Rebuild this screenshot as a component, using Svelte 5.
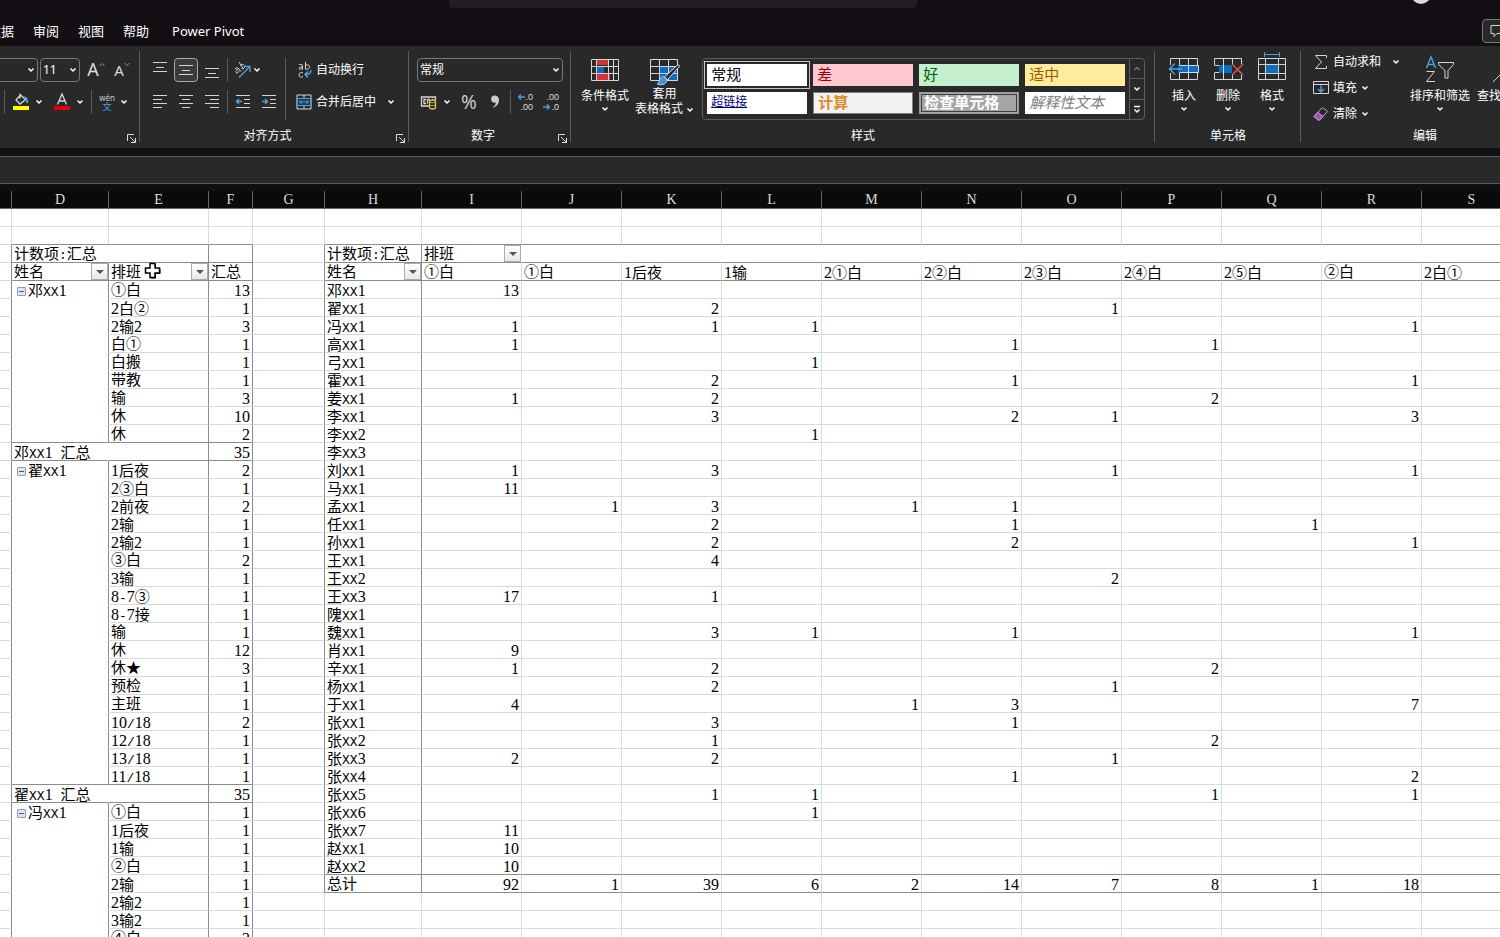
<script lang="ts">
type LeftRow = { name?: string; shift?: string; count: number; total?: boolean };

const tabs = ["数据", "审阅", "视图", "帮助"];

const columns = [
  { id: "C", width: 12 },
  { id: "D", width: 97 },
  { id: "E", width: 100 },
  { id: "F", width: 44 },
  { id: "G", width: 72 },
  { id: "H", width: 97 },
  ..."IJKLMNOPQRSTUV".split("").map((id) => ({ id, width: 100 })),
];

function person(name: string, items: [string, number][]): LeftRow[] {
  return items.map(([shift, count], i) => ({
    name: i === 0 ? name : undefined,
    shift,
    count,
  }));
}

const left: LeftRow[] = [
  ...person("邓XX1", [
    ["①白", 13], ["2白②", 1], ["2输2", 3], ["白①", 1], ["白搬", 1],
    ["带教", 1], ["输", 3], ["休", 10], ["休", 2],
  ]),
  { name: "邓XX1 汇总", count: 35, total: true },
  ...person("翟XX1", [
    ["1后夜", 2], ["2③白", 1], ["2前夜", 2], ["2输", 1], ["2输2", 1],
    ["③白", 2], ["3输", 1], ["8-7③", 1], ["8-7接", 1], ["输", 1],
    ["休", 12], ["休★", 3], ["预检", 1], ["主班", 1], ["10/18", 2],
    ["12/18", 1], ["13/18", 1], ["11/18", 1],
  ]),
  { name: "翟XX1 汇总", count: 35, total: true },
  ...person("冯XX1", [
    ["①白", 1], ["1后夜", 1], ["1输", 1], ["②白", 1], ["2输", 1],
    ["2输2", 1], ["3输2", 1], ["④白", 2],
  ]),
];

const shifts = ["①白", "①白", "1后夜", "1输", "2①白", "2②白", "2③白", "2④白", "2⑤白", "②白", "2白①"];

// counts are keyed by column letter
const right: [string, Record<string, number>][] = [
  ["邓XX1", { I: 13 }],
  ["翟XX1", { K: 2, O: 1 }],
  ["冯XX1", { I: 1, K: 1, L: 1, R: 1 }],
  ["高XX1", { I: 1, N: 1, P: 1 }],
  ["弓XX1", { L: 1 }],
  ["霍XX1", { K: 2, N: 1, R: 1 }],
  ["姜XX1", { I: 1, K: 2, P: 2 }],
  ["李XX1", { K: 3, N: 2, O: 1, R: 3 }],
  ["李XX2", { L: 1 }],
  ["李XX3", {}],
  ["刘XX1", { I: 1, K: 3, O: 1, R: 1 }],
  ["马XX1", { I: 11 }],
  ["孟XX1", { J: 1, K: 3, M: 1, N: 1 }],
  ["任XX1", { K: 2, N: 1, Q: 1 }],
  ["孙XX1", { K: 2, N: 2, R: 1 }],
  ["王XX1", { K: 4 }],
  ["王XX2", { O: 2 }],
  ["王XX3", { I: 17, K: 1 }],
  ["隗XX1", {}],
  ["魏XX1", { K: 3, L: 1, N: 1, R: 1 }],
  ["肖XX1", { I: 9 }],
  ["辛XX1", { I: 1, K: 2, P: 2 }],
  ["杨XX1", { K: 2, O: 1 }],
  ["于XX1", { I: 4, M: 1, N: 3, R: 7 }],
  ["张XX1", { K: 3, N: 1 }],
  ["张XX2", { K: 1, P: 2 }],
  ["张XX3", { I: 2, K: 2, O: 1 }],
  ["张XX4", { N: 1, R: 2 }],
  ["张XX5", { K: 1, L: 1, P: 1, R: 1 }],
  ["张XX6", { L: 1 }],
  ["张XX7", { I: 11 }],
  ["赵XX1", { I: 10 }],
  ["赵XX2", { I: 10 }],
  ["总计", { I: 92, J: 1, K: 39, L: 6, M: 2, N: 14, O: 7, P: 8, Q: 1, R: 18 }],
];

const firstData = 4;
const lastRight = firstData + right.length - 1;
const rowCount = firstData + left.length;

function buildCell(r: number, c: number) {
  const col = columns[c].id;
  const item = left[r - firstData];
  const next = left[r - firstData + 1];
  const cell = { text: "", num: false, filter: false, toggle: false, cls: "" };
  const cls: string[] = [];

  if (c >= 1 && c <= 3) {
    if (r === 2 && c === 1) cell.text = "计数项:汇总";
    if (r === 3) {
      cell.text = ["姓名", "排班", "汇总"][c - 1];
      cell.filter = c < 3;
    }
    if (item) {
      if (c === 1) {
        cell.text = item.name ?? "";
        cell.toggle = !!item.name && !item.total;
      }
      if (c === 2) cell.text = item.shift ?? "";
      if (c === 3) {
        cell.text = String(item.count);
        cell.num = true;
      }
    }
    if (r >= 1 && r <= 3) cls.push("dark-b");
    else if (item && (item.total || next?.total)) cls.push("dark-b");
    else if (item && c === 1) cls.push("no-b");
    if (r >= 2) cls.push(c === 1 && (r === 2 || item?.total) ? "no-r" : "dark-r");
  }
  if (c === 0 && r >= 2) cls.push("dark-r");
  if (c === 4 && r >= 2 && r <= lastRight) cls.push("dark-r");

  if (c >= 5) {
    const entry = right[r - firstData];
    if (r === 2 && c === 5) cell.text = "计数项:汇总";
    if (r === 2 && c === 6) cell.text = "排班";
    if (r === 3) cell.text = c === 5 ? "姓名" : (shifts[c - 6] ?? "");
    cell.filter = (r === 2 && c === 6) || (r === 3 && c === 5);
    if (entry) {
      if (c === 5) cell.text = entry[0];
      else if (entry[1][col]) {
        cell.text = String(entry[1][col]);
        cell.num = true;
      }
    }
    if ((r >= 1 && r <= 3) || r === lastRight - 1 || r === lastRight) cls.push("dark-b");
    if (c === 5 && r >= 2 && r <= lastRight) cls.push("dark-r");
    if (c > 5 && r === 2) cls.push("no-r");
  }
  cell.cls = cls.join(" ");
  return cell;
}

const grid = Array.from({ length: rowCount }, (_, r) => columns.map((_, c) => buildCell(r, c)));

// digits and other latin characters are set so that each is half as wide as a hanzi
function runs(text: string) {
  return text.split(/(\d+|[ -~]+?(?=\d|[^ -~]|$))/).filter(Boolean).map((part) => ({
    part,
    kind: /^\d/.test(part) ? "digit" : /^[ -~]/.test(part) ? "half" : "full",
  }));
}

const cellStyles = [
  ["常规", "normal"], ["差", "bad"], ["好", "good"], ["适中", "neutral"],
  ["超链接", "hyper"], ["计算", "calc"], ["检查单元格", "check"], ["解释性文本", "note"],
];

const alignIcons = {
  left: "M1 1.500h14M1 5.500h9M1 9.500h14M1 13.500h9",
  center: "M1 1.500h14M4 5.500h8M1 9.500h14M4 13.500h8",
  right: "M1 1.500h14M6 5.500h9M1 9.500h14M6 13.500h9",
};
</script>

{#snippet chevron()}
  <svg class="chevron" width="8" height="6" viewBox="0 0 8 6"><path d="M1.5 1.5 4 4l2.5-2.5" /></svg>
{/snippet}

{#snippet launcher(label)}
  <button class="launcher" aria-label={label}>
    <svg width="9" height="9" viewBox="0 0 9 9"><path d="M.5 7V.5H7M3 3l5 5M8.5 4v4.5H4" /></svg>
  </button>
{/snippet}

{#snippet stroke(d)}
  <svg width="16" height="16" viewBox="0 0 16 16"><path class="line" {d} /></svg>
{/snippet}

<div class="app">
  <header>
    <div class="search"></div>
    <div class="avatar"></div>
    <nav>
      {#each tabs as tab}
        <button class="tab">{tab}</button>
      {/each}
      <button class="tab">Power Pivot</button>
      <button class="comments" aria-label="批注">
        <svg width="16" height="14" viewBox="0 0 16 14"><path class="line" d="M1 1.500h14v8H7l-3 3v-3H1z" /></svg>
      </button>
    </nav>
  </header>

  <section class="ribbon">
    <div class="group font">
      <div class="body rows">
        <div class="row">
          <span class="combo name"><select aria-label="字体"><option></option></select>{@render chevron()}</span>
          <span class="combo size"><select aria-label="字号"><option>11</option></select>{@render chevron()}</span>
          <button class="tool grow" aria-label="增大字号"><span class="big">A</span><svg width="6" height="5" viewBox="0 0 6 5"><path class="blue" d="M.5 4 3 1.500 5.500 4" /></svg></button>
          <button class="tool shrink" aria-label="减小字号"><span class="small">A</span><svg width="6" height="5" viewBox="0 0 6 5"><path class="blue" d="M.5 1 3 3.500 5.500 1" /></svg></button>
        </div>
        <div class="row end">
          <i class="sep"></i>
          <button class="split" aria-label="填充颜色">
            <svg width="18" height="18" viewBox="0 0 18 18">
              <path class="line" d="M8 .5v5M8.500 2 4 7l4 4 5.500-4.500z" stroke-width="1.300" />
              <path class="blue" d="M12 4.500c2.500 0 3.500 2 3 5.500" stroke-width="2" />
              <path d="M1 13h16v4H1z" fill="#ff0" />
            </svg>
            {@render chevron()}
          </button>
          <button class="split" aria-label="字体颜色">
            <svg width="18" height="18" viewBox="0 0 18 18">
              <path class="line" d="M4.500 11.500 9 1l4.500 10.500M6 8h6" stroke-width="1.300" />
              <path d="M1 13h16v4H1z" fill="#e60000" />
            </svg>
            {@render chevron()}
          </button>
          <i class="sep"></i>
          <button class="split phonetic" aria-label="拼音"><span><b>wén</b><em>文</em></span>{@render chevron()}</button>
        </div>
      </div>
      <div class="caption"><span>字体</span>{@render launcher("字体设置")}</div>
    </div>

    <div class="group align">
      <div class="body">
        <div class="rows">
          <div class="row">
            <button class="tool" aria-label="顶端对齐">{@render stroke("M1 .5h14M4 5.500h8M1 9.500h14")}</button>
            <button class="tool on" aria-label="垂直居中">{@render stroke("M1 3.500h14M4 8.500h8M1 12.500h14")}</button>
            <button class="tool" aria-label="底端对齐">{@render stroke("M1 6.500h14M4 11.500h8M1 15.500h14")}</button>
            <i class="sep"></i>
            <button class="split angle" aria-label="方向">
              <svg width="18" height="18" viewBox="0 0 18 18">
                <path class="line" d="M2 8c1-1.500 3-1.500 4 0l2 2.500M5 8.500c-2 .5-3 2-2 3s3 0 3-2M6 1l4.500 7M7.500 4.500c1.500-2 4-1 4 1s-2 3-3 2" />
                <path class="blue" d="M6 16.500 16 6.500M11 5.500h6V11" stroke-width="1.300" />
              </svg>
              {@render chevron()}
            </button>
          </div>
          <div class="row">
            <button class="tool" aria-label="左对齐">{@render stroke(alignIcons.left)}</button>
            <button class="tool" aria-label="居中">{@render stroke(alignIcons.center)}</button>
            <button class="tool" aria-label="右对齐">{@render stroke(alignIcons.right)}</button>
            <i class="sep"></i>
            <button class="tool" aria-label="减少缩进">
              <svg width="16" height="16" viewBox="0 0 16 16"><path class="line" d="M1 1.500h14M9 5.500h6M9 9.500h6M1 13.500h14" /><path class="blue" d="M7 7.500H1.500M4 5 1.500 7.500 4 10" stroke-width="1.600" /></svg>
            </button>
            <button class="tool" aria-label="增加缩进">
              <svg width="16" height="16" viewBox="0 0 16 16"><path class="line" d="M1 1.500h14M9 5.500h6M9 9.500h6M1 13.500h14" /><path class="blue" d="M1 7.500h5.500M4 5l2.500 2.500L4 10" stroke-width="1.600" /></svg>
            </button>
          </div>
        </div>
        <i class="sep tall"></i>
        <div class="rows">
          <button class="text-tool">
            <svg width="16" height="18" viewBox="0 0 16 18">
              <path class="line" d="M3 4c1-1 3.500-1 3.500.8V8.500M6.500 6C4 6 3 6.500 3 7.500s2.500 1.300 3.500-.5M9.500 1v7.500M9.500 5c1-1.800 4-1.500 4 1s-3 3-4 1.200M7 12c-1.500-1.200-4-.5-4 1.800s2.500 3 4 1.700" />
              <path class="blue" d="M15 9c0 3-1 4.500-5.500 4.500M12 10.500l-3 3 3 3" stroke-width="1.500" />
            </svg>
            自动换行
          </button>
          <button class="text-tool wide">
            <svg width="16" height="16" viewBox="0 0 16 16">
              <path d="M1 4.500h14v7H1z" fill="#1f3b52" />
              <path class="line" d="M1 1h14v14H1zM8 1v3M8 12v3" />
              <path class="blue" d="M1 4.500h14v7H1zM3.500 8h9M5.500 6l-2 2 2 2M10.500 6l2 2-2 2" />
            </svg>
            <span>合并后居中</span>
            {@render chevron()}
          </button>
        </div>
      </div>
      <div class="caption"><span>对齐方式</span>{@render launcher("对齐设置")}</div>
    </div>

    <div class="group number">
      <div class="body rows">
        <span class="combo format"><select aria-label="数字格式"><option>常规</option></select>{@render chevron()}</span>
        <div class="row">
          <button class="split money" aria-label="会计数字格式">
            <svg width="18" height="18" viewBox="0 0 18 18">
              <path class="line" d="M9 13H1.500V4h14v3M6 6.500H4v4h2M7.500 10.500v-4H10M12 6.500h1" stroke-width="1.300" />
              <path d="M9.500 8.500c0-2 6-2 6 0v6c0 2-6 2-6 0z" fill="#292929" stroke="#e8c15c" stroke-width="1.300" />
              <path d="M9.500 8.500c0 1.500 6 1.500 6 0M9.500 11.500c0 1.500 6 1.500 6 0" fill="none" stroke="#e8c15c" />
            </svg>
            {@render chevron()}
          </button>
          <button class="tool percent">%</button>
          <button class="tool comma" aria-label="千位分隔样式">
            <svg width="10" height="16" viewBox="0 0 10 16"><path d="M5 1.500a3.500 3.500 0 1 0-.5 7.200c.8 0 1.300-.2 1.300-.2 0 2-1.300 4-3.800 5.500 4-.9 7-4 7-8 0-3-2-4.500-4-4.500z" fill="#ccc" /></svg>
          </button>
          <i class="sep"></i>
          <button class="tool decimals" aria-label="增加小数位数">
            <span><svg width="8" height="8" viewBox="0 0 8 8"><path class="blue" d="M8 4H1.500M4 1.500 1.500 4 4 6.500" stroke-width="1.300" /></svg>.0</span>
            <span>.00</span>
          </button>
          <button class="tool decimals" aria-label="减少小数位数">
            <span>.00</span>
            <span><svg width="8" height="8" viewBox="0 0 8 8"><path class="blue" d="M0 4h6.500M4 1.500 6.500 4 4 6.500" stroke-width="1.300" /></svg>.0</span>
          </button>
        </div>
      </div>
      <div class="caption"><span>数字</span>{@render launcher("数字设置")}</div>
    </div>

    <div class="group styles">
      <div class="body">
        <button class="big-tool">
          <svg width="30" height="24" viewBox="0 0 30 24">
            <path d="M6 1h12v6H6zM6 16h14v7H6z" fill="#d13438" />
            <path d="M6 8h8v7H6z" fill="#0f6cbd" />
            <path class="line" d="M1.500 1.500h27v21h-27zM6.500 1.500v21M18.500 1.500v21M23.500 1.500v21M1.500 8.500h27M1.500 15.500h27" />
          </svg>
          <span>条件格式</span>
          {@render chevron()}
        </button>
        <button class="big-tool">
          <svg width="32" height="28" viewBox="0 0 32 28">
            <path d="M11 8h18v15H11z" fill="#0f6cbd" />
            <path class="line" d="M1.500 1.500h27v21h-27zM10.500 1.500v21M19.500 1.500v21M1.500 8.500h27M1.500 15.500h27" />
            <path d="m30.500 8.500-12 13-3-2.500L27.500 8c2-1.500 4-1 3 .5z" fill="#292929" stroke="#ddd" />
            <path d="M14.500 18.500c-4 .5-3 5-6.500 7.500 6 2.500 11-1 9.500-5z" fill="#3a96dd" stroke="#9cd0f5" />
          </svg>
          <span>套用</span>
          <span class="last">表格格式 {@render chevron()}</span>
        </button>
        <div class="gallery">
          <div class="swatches">
            {#each cellStyles as [label, kind]}
              <button class="swatch {kind}">{label}</button>
            {/each}
          </div>
          <div class="scroll">
            <button class="up" aria-label="向上"><svg class="chevron" width="8" height="6" viewBox="0 0 8 6"><path d="M1.500 4 4 1.500 6.500 4" /></svg></button>
            <button aria-label="向下">{@render chevron()}</button>
            <button aria-label="其他"><svg class="chevron" width="8" height="9" viewBox="0 0 8 9"><path d="M1 1.500h6M1.500 4.500 4 7l2.500-2.500" /></svg></button>
          </div>
        </div>
      </div>
      <div class="caption"><span>样式</span></div>
    </div>

    <div class="group cells">
      <div class="body">
        <button class="big-tool">
          <svg width="32" height="24" viewBox="0 3 32 24">
            <path class="line" d="M2.500 3.500h27v21h-27zM11.500 3.500v21M20.500 3.500v21" />
            <path d="M10 10h21v8H10z" fill="#0f6cbd" />
            <path d="M11.500 10.500h19v7h-19M20.500 10v8" fill="none" stroke="#bfe0fa" />
            <path d="M1 10h9v8H1z" fill="#292929" />
            <path class="blue" d="M14 14H1.500M7 8.500 1.500 14 7 19.500" stroke-width="1.500" />
          </svg>
          <span>插入</span>
          {@render chevron()}
        </button>
        <button class="big-tool">
          <svg width="32" height="24" viewBox="0 3 32 24">
            <path class="line" d="M2.500 10V3.500h27V10M2.500 18v6.500h27V18M11.500 3.500v21M20.500 3.500v21M2.500 10.500h27M2.500 17.500h18" />
            <path d="M7 10h13v8H7z" fill="#0f6cbd" />
            <path d="M11.500 10v8" stroke="#bfe0fa" />
            <path d="M20 9h12v11H20z" fill="#292929" />
            <path d="m20 9 11 11M31 9 20 20" stroke="#d9534f" stroke-width="1.500" />
          </svg>
          <span>删除</span>
          {@render chevron()}
        </button>
        <button class="big-tool">
          <svg width="32" height="24" viewBox="0 7 32 24">
            <path class="blue" d="M8.500 1v5M23.500 1v5M8.500 3.500h15" />
            <path d="M9 14h13v8H9z" fill="#0f6cbd" />
            <path class="line" d="M2.500 7.500h27v21h-27zM9.500 7.500v21M22.500 7.500v21M2.500 13.500h27M2.500 22.500h27" />
          </svg>
          <span>格式</span>
          {@render chevron()}
        </button>
      </div>
      <div class="caption"><span>单元格</span></div>
    </div>

    <div class="group editing">
      <div class="body">
        <div class="stack">
          <button class="text-tool sum">
            <svg width="16" height="16" viewBox="0 0 16 16"><path class="line" d="M13.500 4V1.500h-11L8.500 8l-6 6.500h11V12" /></svg>
            <span>自动求和</span>{@render chevron()}
          </button>
          <button class="text-tool">
            <svg width="16" height="16" viewBox="0 0 16 16"><path class="line" d="M.5 1.500h15v12H.5zM.5 4.500h15" /><path class="blue" d="M8 5.500v6M5 9l3 3 3-3" stroke-width="1.500" /></svg>
            <span>填充</span>{@render chevron()}
          </button>
          <button class="text-tool">
            <svg width="16" height="16" viewBox="0 0 16 16"><path d="m9.500 1.500 5 4L6 14.500l-5-4z" fill="#292929" stroke="#d59ae0" /><path d="m5 6.500 5 4-4 4-5-4z" fill="#a14cb0" stroke="#d59ae0" /></svg>
            <span>清除</span>{@render chevron()}
          </button>
        </div>
        <button class="big-tool">
          <svg width="30" height="26" viewBox="0 2 30 26">
            <path class="blue" d="M1.500 12 6 1l4.500 11M3 8.500h6" stroke-width="1.500" />
            <path class="line" d="M1.500 15.500h8l-8 10h8.500M13.500 6.500h15v2l-5.500 6V22h-3v-7.500l-6.500-6z" />
          </svg>
          <span>排序和筛选</span>
          {@render chevron()}
        </button>
        <button class="big-tool">
          <svg width="30" height="26" viewBox="0 2 30 26"><path class="line" d="m1 26 11-11" /><circle class="line" cx="18" cy="9" r="8" /></svg>
          <span>查找和选择</span>
          {@render chevron()}
        </button>
      </div>
      <div class="caption"><span>编辑</span></div>
    </div>
  </section>

  <div class="formula"><input aria-label="编辑栏" /></div>

  <main class="sheet">
    <table>
      <colgroup>
        {#each columns as col}
          <col style:width="{col.width}px" />
        {/each}
      </colgroup>
      <thead>
        <tr>
          {#each columns as col, i}
            <th scope="col">{i ? col.id : ""}</th>
          {/each}
        </tr>
      </thead>
      <tbody>
        {#each grid as row}
          <tr>
            {#each row as cell}
              <td class={cell.cls}>
                <div class="cell" class:num={cell.num}>
                  {#if cell.toggle}
                    <button class="toggle" aria-label="折叠"></button>
                  {/if}
                  <span class="value">{#each runs(cell.text) as run}<span class={run.kind}>{run.part}</span>{/each}</span>
                  {#if cell.filter}
                    <button class="filter" aria-label="筛选"></button>
                  {/if}
                </div>
              </td>
            {/each}
          </tr>
        {/each}
      </tbody>
    </table>
    <svg class="pointer" width="17" height="17" viewBox="0 0 17 17">
      <path d="M6 1.500h5V6h4.500v5H11v4.500H6V11H1.500V6H6z" fill="#fff" stroke="#000" stroke-width="1.500" />
      <path d="M11.500 2v4M16 7v4.500h-4.500V16H7" fill="none" stroke="#000" />
    </svg>
  </main>
</div>

<style>
  :global(body) {
    margin: 0;
    background: #100d12;
  }
  .app {
    display: flex;
    flex-direction: column;
    height: 100vh;
    overflow: hidden;
    background: #120e13;
    color: #fff;
    font: 12px/16px "Noto Sans", "Noto Sans CJK SC", sans-serif;
  }
  button,
  select,
  input {
    margin: 0;
    padding: 0;
    border: 0;
    background: none;
    color: inherit;
    font: inherit;
  }
  svg {
    flex: none;
    overflow: visible;
  }
  .chevron path {
    fill: none;
    stroke: #fff;
    stroke-width: 1.5;
  }
  .line {
    fill: none;
    stroke: #d6d6d6;
  }
  .blue {
    fill: none;
    stroke: #4aa0e0;
  }

  /* title bar and tabs */
  header {
    position: relative;
    height: 46px;
    display: flex;
    flex-direction: column;
    justify-content: space-between;
  }
  .search {
    align-self: center;
    width: 468px;
    height: 8px;
    margin-right: 134px;
    border-radius: 0 0 4px 4px;
    background: #201e21;
  }
  .avatar {
    position: absolute;
    top: -16px;
    right: 69px;
    width: 20px;
    height: 20px;
    border-radius: 50%;
    background: #ddd8dd;
  }
  nav {
    display: flex;
    align-items: center;
    height: 30px;
    margin-left: -12px;
    font-size: 13px;
    gap: 19px;
  }
  .tab:nth-child(5) {
    margin-left: 4px;
  }
  .comments {
    display: flex;
    align-items: center;
    flex: none;
    height: 24px;
    width: 36px;
    margin: 0 -18px 0 auto;
    padding-left: 7px;
    border: 1px solid #777;
    border-radius: 4px;
    background: #292929;
  }

  /* ribbon */
  .ribbon {
    flex: none;
    display: flex;
    overflow: hidden;
    background: #292929;
  }
  .group {
    position: relative;
    flex: none;
    box-sizing: border-box;
    display: flex;
    flex-direction: column;
    justify-content: space-between;
    height: 102px;
    padding: 12px 0 4px;
  }
  .group::after {
    content: "";
    position: absolute;
    right: 0;
    top: 5px;
    bottom: 6px;
    width: 1px;
    background: #5c5c5c;
  }
  .font {
    width: 295px;
    margin-left: -155px;
  }
  .align {
    width: 269px;
    padding-left: 8px;
  }
  .number {
    width: 162px;
    padding-left: 8px;
  }
  .styles {
    width: 584px;
  }
  .cells {
    width: 146px;
  }
  .editing {
    width: 248px;
  }
  .body {
    display: flex;
  }
  .rows {
    display: flex;
    flex-direction: column;
    gap: 8px;
  }
  .row {
    display: flex;
    align-items: center;
    gap: 2px;
    height: 24px;
  }
  .caption {
    display: flex;
    height: 16px;
  }
  .align .caption,
  .number .caption {
    margin-left: -8px;
  }
  .caption span {
    flex: 1;
    text-align: center;
  }
  .launcher {
    width: 14px;
    height: 16px;
    display: flex;
    align-items: flex-end;
    padding: 0 0 1px 1px;
  }
  .launcher path {
    fill: none;
    stroke: #ddd;
  }
  .sep {
    width: 1px;
    height: 24px;
    margin: 0 1px;
    background: #5c5c5c;
  }
  .sep.tall {
    height: 62px;
    margin: 0 10px 0 4px;
  }
  .tool {
    box-sizing: border-box;
    display: flex;
    align-items: center;
    justify-content: center;
    width: 24px;
    height: 24px;
  }
  .tool.on {
    border: 1px solid #aaa;
    border-radius: 4px;
    background: #3a3a3a;
  }
  .split {
    display: flex;
    align-items: center;
    gap: 5px;
    height: 24px;
    padding: 0 4px;
  }
  .angle {
    gap: 2px;
    padding: 0 2px;
  }
  .combo {
    box-sizing: border-box;
    display: flex;
    align-items: center;
    height: 24px;
    padding-right: 2px;
    border: 1px solid #777;
    border-radius: 4px;
  }
  .combo select {
    flex: 1;
    min-width: 0;
    height: 22px;
    padding-left: 2px;
    appearance: none;
  }
  .combo.name {
    width: 130px;
    margin-left: 63px;
  }
  .combo.size {
    width: 40px;
  }
  .combo.format {
    width: 146px;
  }
  .grow,
  .shrink {
    align-items: flex-start;
    color: #ddd;
  }
  .grow {
    margin-left: 2px;
  }
  .grow svg,
  .shrink svg {
    margin-top: 4px;
  }
  .big {
    font-size: 18px;
    line-height: 22px;
  }
  .small {
    font-size: 15px;
    line-height: 24px;
  }
  .row.end {
    justify-content: flex-end;
    padding-right: 8px;
  }
  .phonetic span {
    display: flex;
    flex-direction: column;
    align-items: center;
    font-size: 9px;
    line-height: 9px;
  }
  .phonetic b {
    font-weight: 400;
    font-size: 8px;
    color: #ccc;
  }
  .phonetic em {
    font-style: normal;
    color: #4aa0e0;
  }
  .money {
    padding: 0 4px 0 3px;
  }
  .percent {
    color: #ccc;
    font-size: 19px;
  }
  .number .sep {
    margin-right: 0;
  }
  .decimals {
    flex-direction: column;
    align-items: flex-end;
    padding-right: 4px;
    color: #ddd;
    font: 9px/10px "Liberation Sans", sans-serif;
  }
  .decimals span {
    display: flex;
    align-items: center;
  }
  .text-tool {
    display: flex;
    align-items: center;
    gap: 4px;
    height: 24px;
    padding: 0;
    white-space: nowrap;
  }
  .text-tool.wide .chevron {
    margin-left: 7px;
  }
  .big-tool {
    display: flex;
    flex-direction: column;
    align-items: center;
    height: 62px;
    line-height: 15px;
    white-space: nowrap;
  }
  .big-tool > span:first-of-type {
    margin-top: auto;
  }
  .big-tool > .chevron {
    margin: 3px 0 8px;
  }
  .big-tool > .last {
    margin-bottom: 4px;
  }
  .styles .body {
    gap: 6px;
    padding-left: 10px;
  }
  .cells .body {
    gap: 12px;
    padding-left: 13px;
  }
  .editing .body {
    padding-left: 12px;
  }
  .editing .big-tool:last-child {
    margin-left: 7px;
  }
  .stack {
    display: flex;
    flex-direction: column;
    gap: 2px;
    width: 97px;
    margin-top: -8px;
  }
  .sum .chevron {
    margin-left: 7px;
  }

  /* cell style gallery */
  .gallery {
    display: flex;
    margin-left: 2px;
    height: 60px;
    border: 1px solid #5c5c5c;
    border-radius: 4px;
  }
  .swatches {
    display: grid;
    grid-template-columns: repeat(4, 100px);
    grid-auto-rows: 22px;
    gap: 6px;
    padding: 5px 4px;
  }
  .swatch {
    padding: 0 4px 2px;
    background: #fff;
    color: #000;
    text-align: left;
    font-size: 15px;
    line-height: 18px;
  }
  .normal {
    outline: 1px solid #c4c4c4;
    outline-offset: 2px;
  }
  .bad {
    background: #ffc7ce;
    color: #9c0006;
  }
  .good {
    background: #c6efce;
    color: #006100;
  }
  .neutral {
    background: #ffeb9c;
    color: #9c5700;
  }
  .hyper {
    color: #00007c;
    font-size: 12px;
    text-decoration: underline;
  }
  .calc {
    border: 1px solid #7f7f7f;
    background: #f2f2f2;
    color: #e0892a;
    font-weight: 700;
  }
  .check {
    border: 3px double #3f3f3f;
    outline: 1px solid #999;
    outline-offset: -1px;
    padding: 0 2px 2px;
    background: #a5a5a5;
    color: #fff;
    font-weight: 700;
    line-height: 14px;
  }
  .note {
    color: #7f7f7f;
    font-style: italic;
  }
  .scroll {
    display: flex;
    flex-direction: column;
    width: 14px;
    border-left: 1px solid #5c5c5c;
  }
  .scroll button {
    flex: 1;
    display: grid;
    place-items: center;
  }
  .scroll button + button {
    border-top: 1px solid #5c5c5c;
  }
  .up {
    opacity: 0.35;
  }

  /* formula bar */
  .formula {
    flex: none;
    display: flex;
    height: 26px;
    margin: 8px 0 7px;
    border: solid #5c5c5c;
    border-width: 1px 0;
    background: #292929;
  }
  .formula input {
    flex: 1;
  }

  /* worksheet */
  .sheet {
    position: relative;
    flex: 1;
    min-height: 0;
    overflow: hidden;
    background: #fff;
    color: #000;
    font-family: "Liberation Mono", "Noto Sans CJK SC", monospace;
    font-size: 15px;
  }
  table {
    width: max-content;
    table-layout: fixed;
    border-spacing: 0;
  }
  th,
  td {
    box-sizing: border-box;
    height: 18px;
    padding: 0;
    border: solid #dadada;
    border-width: 0 1px 1px 0;
    white-space: nowrap;
  }
  th {
    padding-top: 1px;
    border-color: #666;
    background: #0a0a0a;
    color: #ddd;
    font-family: "Liberation Serif", serif;
    font-size: 14px;
    font-weight: 400;
    line-height: 16px;
  }
  td.dark-r {
    border-right-color: #8c8c8c;
  }
  td.dark-b {
    border-bottom-color: #8c8c8c;
  }
  td.no-r {
    border-right-color: #fff;
  }
  td.no-b {
    border-bottom-color: #fff;
  }
  .cell {
    display: flex;
    align-items: center;
    height: 17px;
    padding-left: 2px;
    line-height: 17px;
  }
  .cell.num {
    justify-content: flex-end;
    padding-right: 2px;
  }
  .value {
    padding-top: 3px;
  }
  .half {
    font-size: 13px;
    white-space: pre;
  }
  .digit {
    font-family: "Liberation Serif", serif;
    font-size: 16px;
  }
  .toggle {
    position: relative;
    box-sizing: border-box;
    width: 9px;
    height: 9px;
    margin: 3px 2px 0 3px;
    border: 1px solid #8e9db5;
    border-radius: 1px;
    background: #dfe6f0;
  }
  .toggle::after {
    content: "";
    position: absolute;
    inset: 3px 1px;
    background: #44597c;
  }
  .filter {
    display: grid;
    place-items: center;
    box-sizing: border-box;
    width: 17px;
    height: 17px;
    margin-left: auto;
    border: 1px solid #ababab;
    background: linear-gradient(#fff, #e4e8ee);
  }
  .filter::after {
    content: "";
    border: 4px solid transparent;
    border-top-color: #555;
    border-bottom: 0;
  }
  .pointer {
    position: absolute;
    left: 144px;
    top: 71px;
  }
</style>
